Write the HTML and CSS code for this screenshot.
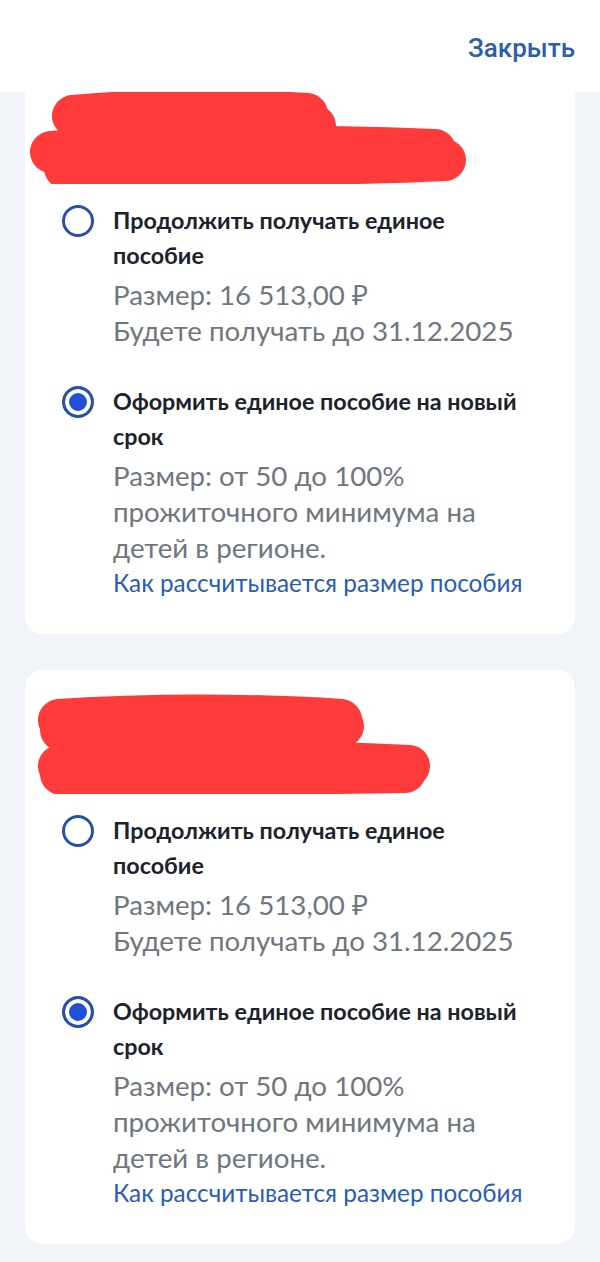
FILE: index.html
```html
<!DOCTYPE html>
<html lang="ru">
<head>
    <meta charset="UTF-8">
    <meta name="viewport" content="width=device-width, initial-scale=1.0">
    <title>Единое пособие</title>
    <link rel="stylesheet" href="styles.css">
</head>
<body>
    <div class="top-bar">
        <a class="close_link" href="#">Закрыть</a>
    </div>

    <div class="cards">
        <div class="card">
            <svg class="redact" viewBox="0 0 550 124">
                <path d="M48 56 C110 50 200 48 282 54" />
                <path d="M60 68 C140 62 220 64 290 66" />
                <path d="M26 92 C150 84 300 86 410 90" />
                <path d="M40 108 C160 104 300 106 420 100" />
            </svg>
            <div class="option">
                <span class="radio"></span>
                <div class="option_body">
                    <div class="option_title">Продолжить получать единое пособие</div>
                    <div class="option_text">Размер: 16 513,00 ₽<br>Будете получать до 31.12.2025</div>
                </div>
            </div>
            <div class="option">
                <span class="radio checked"></span>
                <div class="option_body">
                    <div class="option_title">Оформить единое пособие на новый срок</div>
                    <div class="option_text">Размер: от 50 до 100% прожиточного минимума на детей в регионе.</div>
                    <a class="option_link" href="#">Как рассчитывается размер пособия</a>
                </div>
            </div>
        </div>

        <div class="card">
            <svg class="redact" viewBox="0 0 550 124">
                <path d="M34 50 C120 44 230 44 316 50" />
                <path d="M36 60 C130 58 240 58 318 56" />
                <path d="M34 96 C150 92 280 90 384 96" />
                <path d="M36 104 C160 104 280 104 380 102" />
            </svg>
            <div class="option">
                <span class="radio"></span>
                <div class="option_body">
                    <div class="option_title">Продолжить получать единое пособие</div>
                    <div class="option_text">Размер: 16 513,00 ₽<br>Будете получать до 31.12.2025</div>
                </div>
            </div>
            <div class="option">
                <span class="radio checked"></span>
                <div class="option_body">
                    <div class="option_title">Оформить единое пособие на новый срок</div>
                    <div class="option_text">Размер: от 50 до 100% прожиточного минимума на детей в регионе.</div>
                    <a class="option_link" href="#">Как рассчитывается размер пособия</a>
                </div>
            </div>
        </div>
    </div>
</body>
</html>
```

FILE: styles.css
```css
body {
    margin: 0;
    padding: 0;
    background-color: #f1f4f9;
    font-family: Lato, "Noto Sans", sans-serif;
}
.top-bar {
    position: fixed;
    top: 0;
    left: 0;
    right: 0;
    height: 92px;
    background-color: #ffffff;
    display: flex;
    align-items: center;
    justify-content: flex-end;
    padding-right: 25px;
    z-index: 10;
}
.close_link {
    font-family: Roboto, sans-serif;
    font-weight: 500;
    font-size: 26px;
    color: #2c5eae;
    text-decoration: none;
    margin-top: 4px;
}
.cards {
    display: flex;
    flex-direction: column;
    gap: 36px;
    padding: 60px 25px 14px;
}
.card {
    background-color: #ffffff;
    border-radius: 18px;
    padding: 0 49px 36px 37px;
}
.redact {
    display: block;
    width: calc(100% + 86px);
    height: 124px;
    margin: 0 -49px 19px -37px;
}
.redact path {
    fill: none;
    stroke: #fe3a3a;
    stroke-width: 42;
    stroke-linecap: round;
}
.option {
    display: flex;
    gap: 19px;
}
.option + .option {
    margin-top: 35px;
}
.radio {
    flex: none;
    width: 32px;
    height: 32px;
    margin-top: 2px;
    box-sizing: border-box;
    border: 3px solid #2a50a6;
    border-radius: 50%;
}
.radio.checked {
    background-color: #1f50d6;
    box-shadow: inset 0 0 0 4px #ffffff;
}
.option_title {
    font-weight: 700;
    font-size: 23.3px;
    line-height: 35px;
    color: #1c222b;
}
.option_text {
    margin-top: 4px;
    font-size: 27.7px;
    line-height: 36px;
    color: #6f767e;
}
.option_link {
    display: block;
    margin-top: 2px;
    font-size: 24.3px;
    line-height: 30px;
    color: #2a5cb5;
    text-decoration: none;
}
```
